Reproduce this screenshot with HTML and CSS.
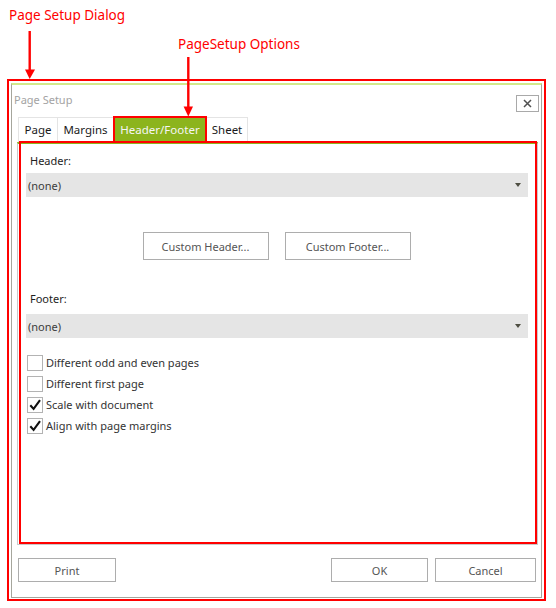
FILE: index.html
```html
<!DOCTYPE html>
<html>
<head>
<meta charset="utf-8">
<title>Page Setup</title>
<link rel="stylesheet" href="styles.css">
</head>
<body>
<div class="stage">
  <div class="dialog">
    <div class="titlebar">
      <span class="title">Page Setup</span>
      <button class="close" aria-label="Close"><svg width="9" height="9" viewBox="0 0 9 9"><path d="M1 1L8 8M8 1L1 8" stroke="#505050" stroke-width="1.5" fill="none"/></svg></button>
    </div>
    <div class="tabs">
      <div class="tab t-page">Page</div>
      <div class="tab t-margins">Margins</div>
      <div class="tab t-hf active">Header/Footer</div>
      <div class="tab t-sheet">Sheet</div>
    </div>
    <div class="pane">
      <div class="label">Header:</div>
      <div class="select"><span>(none)</span><span class="caret"></span></div>
      <div class="custom-row">
        <button class="btn custom">Custom Header...</button>
        <button class="btn custom">Custom Footer...</button>
      </div>
      <div class="label footer-label">Footer:</div>
      <div class="select footer-select"><span>(none)</span><span class="caret"></span></div>
      <div class="checks">
        <div class="check"><span class="box"></span><span>Different odd and even pages</span></div>
        <div class="check"><span class="box"></span><span>Different first page</span></div>
        <div class="check"><span class="box"><svg width="14" height="14" viewBox="0 0 14 14"><path d="M2.3 7.2L5.6 10.9L12 2.2" stroke="#111" stroke-width="2.1" fill="none"/></svg></span><span>Scale with document</span></div>
        <div class="check"><span class="box"><svg width="14" height="14" viewBox="0 0 14 14"><path d="M2.3 7.2L5.6 10.9L12 2.2" stroke="#111" stroke-width="2.1" fill="none"/></svg></span><span>Align with page margins</span></div>
      </div>
    </div>
    <div class="actions">
      <button class="btn print">Print</button>
      <span class="spacer"></span>
      <button class="btn ok">OK</button>
      <button class="btn cancel">Cancel</button>
    </div>
  </div>

  <div class="note note-dialog">Page Setup Dialog</div>
  <div class="note note-options">PageSetup Options</div>
  <svg class="arrows" width="556" height="608" viewBox="0 0 556 608">
    <path d="M29.7 31V70" stroke="#f00" stroke-width="2.4"/>
    <path d="M25 69.5H35L29.7 79Z" fill="#f00"/>
    <path d="M188.3 57V108" stroke="#f00" stroke-width="2.4"/>
    <path d="M183.6 106.5H193L188.3 116.5Z" fill="#f00"/>
  </svg>
  <div class="redbox rb-dialog"></div>
  <div class="redbox rb-tab"></div>
  <div class="redbox rb-pane"></div>
</div>
</body>
</html>
```
FILE: styles.css
```css
html, body {
  margin: 0;
  padding: 0;
  background: #fff;
}
body {
  font-family: "Noto Sans", "Open Sans", sans-serif;
  font-size: 11px;
  color: #222;
}
.stage {
  position: relative;
  width: 556px;
  height: 608px;
  box-sizing: border-box;
  padding: 83px 0 0 11px;
  overflow: hidden;
}
.dialog {
  width: 531px;
  height: 515px;
  box-sizing: border-box;
  border: 1px solid #a6a69c;
  border-top: 2px solid #d3e98a;
  display: flex;
  flex-direction: column;
}
.titlebar {
  height: 32px;
  display: flex;
  align-items: flex-start;
  justify-content: space-between;
  padding: 0 2px 0 2px;
}
.title {
  margin-top: 7px;
  line-height: 16px;
  color: #a3a3a3;
}
.close {
  margin-top: 10px;
  width: 23px;
  height: 17px;
  box-sizing: border-box;
  border: 1px solid #a9a9a9;
  background: #fff;
  padding: 0;
  display: flex;
  align-items: center;
  justify-content: center;
}
.tabs {
  display: flex;
  height: 25px;
  margin-left: 6px;
}
.tab {
  box-sizing: border-box;
  height: 25px;
  line-height: 23px;
  text-align: center;
  border: 1px solid #e4e4e4;
  border-bottom: none;
  border-right: none;
  color: #1b1b1b;
  font-size: 11.5px;
}
.t-page { width: 39px; }
.t-margins { width: 56px; }
.t-hf { width: 93px; }
.t-sheet { width: 42px; border-right: 1px solid #e4e4e4; }
.tab.active {
  background: #8cb41d;
  border-color: #8cb41d;
  color: #f6f6f6;
}
.pane {
  margin-left: 5px;
  width: 521px;
  height: 403px;
  box-sizing: border-box;
  border: 1px solid #c9c9c9;
  border-top: 2px solid #8cb41d;
  display: flex;
  flex-direction: column;
}
.label {
  margin: 9px 0 0 12px;
  line-height: 16px;
  color: #1e1e1e;
}
.select {
  margin: 4px 0 0 8px;
  width: 502px;
  height: 24px;
  box-sizing: border-box;
  background: #e5e5e5;
  display: flex;
  align-items: center;
  justify-content: space-between;
  padding: 0 7px 0 2px;
  color: #3c3c3c;
}
.caret {
  width: 0;
  height: 0;
  border-left: 3px solid transparent;
  border-right: 3px solid transparent;
  border-top: 4px solid #4e4e42;
}
.custom-row {
  margin-top: 35px;
  display: flex;
  justify-content: center;
  gap: 16px;
  padding-right: 2px;
}
.btn {
  font-family: "Noto Sans", "Open Sans", sans-serif;
  font-size: 11px;
  color: #555;
  background: #fff;
  border: 1px solid #adadad;
  box-sizing: border-box;
  padding: 0;
  margin: 0;
}
.custom {
  width: 126px;
  height: 28px;
}
.footer-label {
  margin-top: 31px;
}
.footer-select {
  margin-top: 7px;
}
.checks {
  margin: 14px 0 0 9px;
  display: flex;
  flex-direction: column;
}
.check {
  height: 21px;
  display: flex;
  align-items: center;
  gap: 3px;
  color: #333;
}
.box {
  width: 16px;
  height: 16px;
  box-sizing: border-box;
  border: 1px solid #b3b3b3;
  background: #fff;
  display: flex;
  align-items: center;
  justify-content: center;
}
.actions {
  margin-top: 13px;
  display: flex;
  padding: 0 5px 0 6px;
}
.spacer { flex: 1; }
.print { width: 98px; height: 24px; }
.ok { width: 97px; height: 24px; margin-right: 7px; }
.cancel { width: 101px; height: 24px; }

.note {
  position: absolute;
  color: #f00;
  font-size: 13.5px;
  line-height: 18px;
  white-space: nowrap;
}
.note-dialog { left: 9px; top: 6px; }
.note-options { left: 178px; top: 35px; }
.arrows {
  position: absolute;
  left: 0;
  top: 0;
  pointer-events: none;
}
.redbox {
  position: absolute;
  box-sizing: border-box;
  border: 2px solid #f00;
  pointer-events: none;
}
.rb-dialog { left: 7px; top: 79px; width: 539px; height: 522px; }
.rb-tab { left: 113px; top: 116px; width: 94px; height: 27px; }
.rb-pane { left: 19px; top: 141px; width: 518px; height: 403px; }
```
